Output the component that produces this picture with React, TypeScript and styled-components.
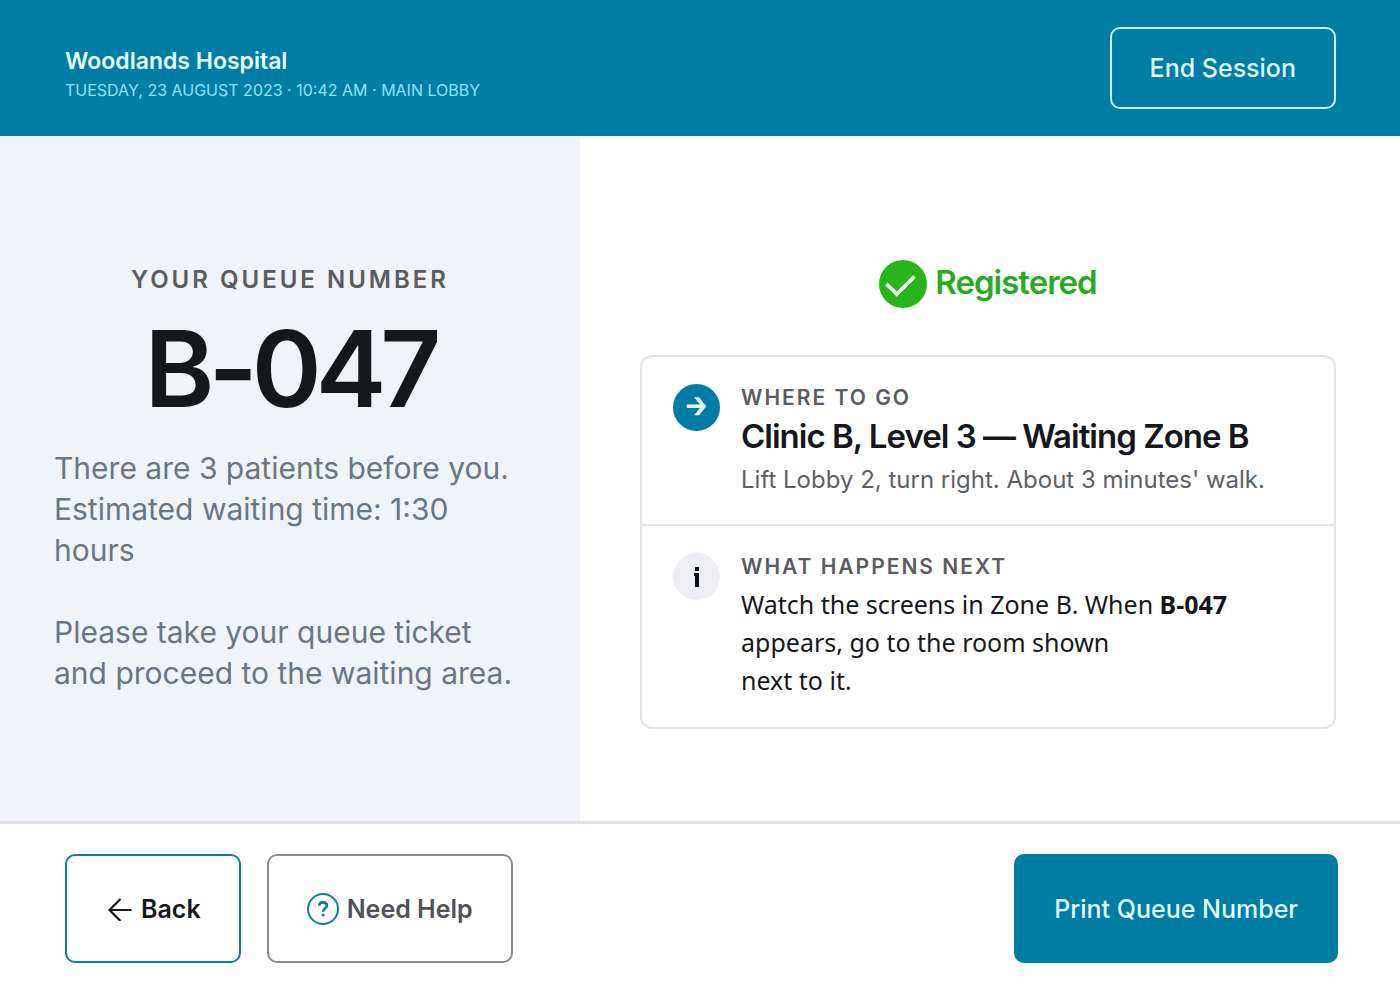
import React from "react";
import styled, { createGlobalStyle } from "styled-components";

const teal = "#007da5";
const ink = "#15171a";

const GlobalStyle = createGlobalStyle`
  *, *::before, *::after { box-sizing: border-box; }
  body {
    margin: 0;
    background: #ffffff;
    color: ${ink};
    font-family: Inter, "Liberation Sans", sans-serif;
  }
  h1, h2, p { margin: 0; }
`;

const Page = styled.div`
  min-height: 100vh;
  display: flex;
  flex-direction: column;
`;

const Header = styled.header`
  display: flex;
  align-items: center;
  justify-content: space-between;
  gap: 24px;
  min-height: 136px;
  padding: 27px 64px 27px 65px;
  background: ${teal};
`;

const HospitalName = styled.p`
  padding-top: 14px;
  font-size: 23px;
  line-height: 30px;
  font-weight: 600;
  color: #e6fdff;
`;

const SessionInfo = styled.p`
  font-size: 16px;
  line-height: 28px;
  text-transform: uppercase;
  color: #8fe3fb;
`;

type Variant = "outlineLight" | "outlineTeal" | "outlineGray" | "solid";

const variants: Record<Variant, { fg: string; bg: string; border: string; weight: number }> = {
  outlineLight: { fg: "#dffcff", bg: teal, border: "#c6f6ff", weight: 500 },
  outlineTeal: { fg: ink, bg: "#ffffff", border: "#0f7c9f", weight: 600 },
  outlineGray: { fg: "#505257", bg: "#ffffff", border: "#8a8b8e", weight: 600 },
  solid: { fg: "#dffcff", bg: teal, border: teal, weight: 500 },
};

const Button = styled.button<{ $variant: Variant; $compact?: boolean }>`
  display: inline-flex;
  align-items: center;
  justify-content: center;
  gap: 8px;
  height: ${(p) => (p.$compact ? 82 : 109)}px;
  padding: 0 38px;
  border: 2px solid ${(p) => variants[p.$variant].border};
  border-radius: 10px;
  background: ${(p) => variants[p.$variant].bg};
  color: ${(p) => variants[p.$variant].fg};
  font-family: inherit;
  font-size: 25px;
  line-height: 32px;
  font-weight: ${(p) => variants[p.$variant].weight};
  white-space: nowrap;
  cursor: pointer;
`;

const Main = styled.main`
  flex: 1;
  display: grid;
  grid-template-columns: 29fr 41fr;
`;

const QueuePanel = styled.section`
  display: flex;
  flex-direction: column;
  justify-content: center;
  padding: 33px 54px 32px;
  background: #f0f3f7;
`;

const QueueLabel = styled.h1`
  font-size: 24px;
  line-height: 32px;
  font-weight: 600;
  letter-spacing: 3px;
  text-align: center;
  text-transform: uppercase;
  color: #5a5c60;
`;

const QueueNumber = styled.p`
  margin: 9px 0 15px;
  font-size: 106px;
  line-height: 128px;
  font-weight: 600;
  letter-spacing: -6px;
  text-align: center;
`;

const QueueText = styled.p`
  font-size: 30px;
  line-height: 41px;
  color: #6b7684;

  & + & { margin-top: 41px; }
`;

const StatusPanel = styled.section`
  display: flex;
  flex-direction: column;
  justify-content: center;
  gap: 47px;
  padding: 64px 64px 32px 60px;
`;

const Status = styled.div`
  display: flex;
  align-items: center;
  justify-content: center;
  gap: 8px;
`;

const StatusText = styled.h2`
  padding-bottom: 4px;
  font-size: 33px;
  line-height: 40px;
  font-weight: 600;
  letter-spacing: -1px;
  color: #27ab22;
`;

const Card = styled.div`
  border: 2px solid #e1e3e6;
  border-radius: 12px;
`;

const CardRow = styled.section`
  display: flex;
  align-items: flex-start;
  gap: 21px;
  padding: 27px 31px 26px;

  & + & { border-top: 2px solid #e1e3e6; }
`;

const CardBody = styled.div`
  flex: 1;
`;

const Badge = styled.span<{ $filled?: boolean }>`
  display: grid;
  place-items: center;
  flex: none;
  width: 47px;
  height: 47px;
  border-radius: 50%;
  background: ${(p) => (p.$filled ? teal : "#eeeff4")};
`;

const RowLabel = styled.h2`
  font-size: 21px;
  line-height: 28px;
  font-weight: 600;
  letter-spacing: 2px;
  text-transform: uppercase;
  color: #5a5c60;
`;

const Destination = styled.p`
  margin: 2px 0 4px;
  font-size: 33px;
  line-height: 44px;
  font-weight: 600;
  letter-spacing: -1px;
`;

const Directions = styled.p`
  font-size: 24px;
  line-height: 36px;
  color: #5d6064;
`;

const Instructions = styled.p`
  margin-top: 4px;
  padding-bottom: 2px;
  font-family: "Noto Sans", "Open Sans", sans-serif;
  font-size: 25px;
  line-height: 38px;
`;

const Footer = styled.footer`
  display: flex;
  align-items: center;
  justify-content: space-between;
  gap: 26px;
  padding: 30px 62px 33px 65px;
  border-top: 3px solid #e0e1e9;
`;

const FooterGroup = styled.div`
  display: flex;
  gap: 26px;
`;

export default function App() {
  return (
    <Page>
      <GlobalStyle />
      <Header>
        <div>
          <HospitalName>Woodlands Hospital</HospitalName>
          <SessionInfo>Tuesday, 23 August 2023 · 10:42 AM · Main Lobby</SessionInfo>
        </div>
        <Button type="button" $variant="outlineLight" $compact>
          End Session
        </Button>
      </Header>
      <Main>
        <QueuePanel>
          <QueueLabel>Your queue number</QueueLabel>
          <QueueNumber>B-047</QueueNumber>
          <QueueText>
            There are 3 patients before you.
            <br />
            Estimated waiting time: 1:30 hours
          </QueueText>
          <QueueText>Please take your queue ticket and proceed to the waiting area.</QueueText>
        </QueuePanel>
        <StatusPanel>
          <Status>
            <svg width="48" height="48" viewBox="0 0 48 48" aria-hidden="true">
              <circle cx="24" cy="24" r="24" fill="#27b519" />
              <path d="M7.500 24 17.800 34 35.500 16.500" fill="none" stroke="#f4fff2" strokeWidth="3.800" />
            </svg>
            <StatusText>Registered</StatusText>
          </Status>
          <Card>
            <CardRow>
              <Badge $filled>
                <svg width="22" height="24" viewBox="0 -2 22 24" aria-hidden="true">
                  <path d="M8.200 -0.800H13L20.300 8.200 13 17.200H8.200L14 10H0.800V6.400H14Z" fill="#e9fdff" />
                </svg>
              </Badge>
              <CardBody>
                <RowLabel>Where to go</RowLabel>
                <Destination>Clinic B, Level 3 — Waiting Zone B</Destination>
                <Directions>Lift Lobby 2, turn right. About 3 minutes' walk.</Directions>
              </CardBody>
            </CardRow>
            <CardRow>
              <Badge>
                <svg width="8" height="20" viewBox="0 0 8 20" aria-hidden="true">
                  <path d="M2 0H6V4H2ZM1 6H6V20H2V9H1Z" fill="#0c0d1c" />
                </svg>
              </Badge>
              <CardBody>
                <RowLabel>What happens next</RowLabel>
                <Instructions>
                  Watch the screens in Zone B. When <strong>B-047</strong> appears, go to the room shown
                  <br />
                  next to it.
                </Instructions>
              </CardBody>
            </CardRow>
          </Card>
        </StatusPanel>
      </Main>
      <Footer>
        <FooterGroup>
          <Button type="button" $variant="outlineTeal">
            <svg width="28" height="24" viewBox="-3 0 28 24" aria-hidden="true">
              <path d="M23.500 13H1.500M12.500 2 1.500 13 12.500 24" fill="none" stroke={ink} strokeWidth="2.200" />
            </svg>
            Back
          </Button>
          <Button type="button" $variant="outlineGray">
            <svg width="32" height="32" viewBox="0 0 32 32" fill="none" aria-hidden="true">
              <circle cx="16" cy="16" r="15" stroke="#0f7c9f" strokeWidth="2" />
              <path
                d="M12.200 12.800C12.200 10.600 13.800 9.400 16 9.400 18.300 9.400 19.900 10.600 19.900 12.500 19.900 15.200 16.200 15.200 16.200 18.400V18.800"
                stroke="#0f7c9f"
                strokeWidth="2.600"
              />
              <path d="M14.700 20.700H17.500V23.300H14.700Z" fill="#0f7c9f" />
            </svg>
            Need Help
          </Button>
        </FooterGroup>
        <Button type="button" $variant="solid">
          Print Queue Number
        </Button>
      </Footer>
    </Page>
  );
}
